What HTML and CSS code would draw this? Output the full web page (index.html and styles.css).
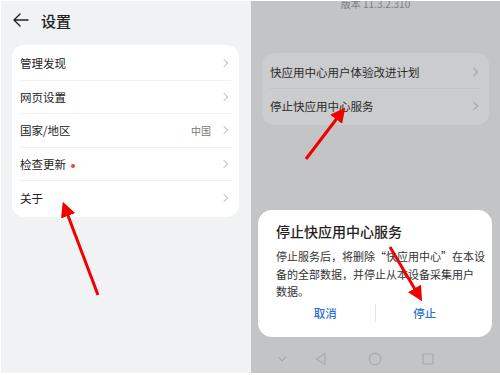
FILE: index.html
```html
<!DOCTYPE html>
<html>
<head>
    <title>设置</title>
    <link rel="stylesheet" href="styles.css">
</head>
<body>
    <div class="screen">
        <div class="panel left">
            <div class="top-bar">
                <svg class="back" width="16" height="14" viewBox="0 0 16 14">
                    <path d="M7 1 L1 7 L7 13 M1 7 H15" fill="none" stroke="#222" stroke-width="1.4" stroke-linecap="round" stroke-linejoin="round"/>
                </svg>
                <span class="title">设置</span>
            </div>
            <div class="card">
                <div class="row"><span class="label">管理发现</span><span class="chev"></span></div>
                <div class="row"><span class="label">网页设置</span><span class="chev"></span></div>
                <div class="row"><span class="label">国家/地区</span><span class="value">中国</span><span class="chev"></span></div>
                <div class="row"><span class="label">检查更新<span class="dot"></span></span><span class="chev"></span></div>
                <div class="row last"><span class="label">关于</span><span class="chev"></span></div>
            </div>
        </div>

        <div class="panel right">
            <div class="version">版本 11.3.2.310</div>
            <div class="card dim">
                <div class="row"><span class="label">快应用中心用户体验改进计划</span><span class="chev"></span></div>
                <div class="row last"><span class="label">停止快应用中心服务</span><span class="chev"></span></div>
            </div>
            <div class="spacer"></div>
            <div class="dialog">
                <div class="dialog-title">停止快应用中心服务</div>
                <div class="dialog-text">停止服务后，将删除“快应用中心”在本设<br>备的全部数据，并停止从本设备采集用户<br>数据。</div>
                <div class="dialog-buttons">
                    <span class="btn">取消</span>
                    <span class="btn-sep"></span>
                    <span class="btn">停止</span>
                </div>
            </div>
            <div class="nav-bar">
                <svg class="nav-down" width="12" height="12" viewBox="0 0 12 12"><path d="M2 4 L6 8 L10 4" fill="none" stroke="#a9aaac" stroke-width="1.2"/></svg>
                <svg class="nav-back" width="14" height="14" viewBox="0 0 14 14"><path d="M11 1.5 L11 12.5 L2.5 7 Z" fill="none" stroke="#a9aaac" stroke-width="1.2" stroke-linejoin="round"/></svg>
                <svg class="nav-home" width="14" height="14" viewBox="0 0 14 14"><circle cx="7" cy="7" r="5.8" fill="none" stroke="#a9aaac" stroke-width="1.2"/></svg>
                <svg class="nav-recent" width="14" height="14" viewBox="0 0 14 14"><rect x="2" y="2" width="10" height="10" rx="1" fill="none" stroke="#a9aaac" stroke-width="1.2"/></svg>
            </div>
        </div>

        <!-- red hint arrows drawn on top of the screenshot -->
        <svg class="arrows" width="500" height="375" viewBox="0 0 500 375">
            <defs>
                <marker id="head" markerWidth="5" markerHeight="5" refX="1" refY="2.5" orient="auto" markerUnits="strokeWidth">
                    <path d="M0 0 L5 2.5 L0 5 Z" fill="#f20000"/>
                </marker>
            </defs>
            <line x1="98" y1="295" x2="67" y2="213" stroke="#f20000" stroke-width="3" marker-end="url(#head)"/>
            <line x1="306" y1="159" x2="338" y2="117" stroke="#f20000" stroke-width="3" marker-end="url(#head)"/>
            <line x1="390" y1="247" x2="416" y2="291" stroke="#f20000" stroke-width="3" marker-end="url(#head)"/>
        </svg>
    </div>
</body>
</html>
```

FILE: styles.css
```css
body {
    margin: 0;
    padding: 0;
    background-color: #fff;
    font-family: "Noto Sans CJK SC", "Noto Sans", sans-serif;
}

.screen {
    position: relative;
    width: 500px;
    height: 375px;
    box-sizing: border-box;
    padding: 1px 0 2px 1px;
    display: flex;
    overflow: hidden;
}

.panel {
    display: flex;
    flex-direction: column;
}

.left {
    width: 250px;
    background-color: #f1f2f4;
}

.right {
    flex: 1;
    background-color: #c3c4c6;
    overflow: hidden;
}

.top-bar {
    display: flex;
    align-items: center;
    height: 38px;
    padding-left: 12px;
}

.title {
    margin-left: 12px;
    font-size: 15px;
    font-weight: 500;
    color: #222;
}

.card {
    margin: 6px 0 0 11px;
    width: 227px;
    background-color: #fff;
    border-radius: 12px;
    padding: 2px 8px;
    box-sizing: border-box;
}

.row {
    display: flex;
    align-items: center;
    height: 33.5px;
    border-bottom: 1px solid #f0f0f2;
    box-sizing: border-box;
}

.row.last {
    border-bottom: none;
}

.label {
    flex: 1;
    font-size: 11.5px;
    color: #222;
}

.value {
    font-size: 10px;
    color: #777;
    margin-right: 10px;
}

.dot {
    display: inline-block;
    width: 4px;
    height: 4px;
    border-radius: 50%;
    background-color: #e8452c;
    margin-left: 5px;
    vertical-align: middle;
}

.chev {
    width: 5px;
    height: 5px;
    border-top: 1px solid #c4c4c6;
    border-right: 1px solid #c4c4c6;
    transform: rotate(45deg);
    margin-right: 4px;
}

.version {
    margin-top: -5px;
    text-align: center;
    font-size: 10px;
    color: #7d7e80;
    height: 14px;
}

.card.dim {
    margin: 43px 0 0 11px;
    background-color: #cbcccd;
    padding: 3px 8px;
}

.card.dim .row {
    height: 33px;
    border-bottom-color: #c2c3c5;
}

.card.dim .label {
    color: #2b2b2b;
}

.card.dim .chev {
    border-color: #a3a4a6;
}

.spacer {
    flex: 1;
}

.dialog {
    margin: 0 8px 0 7px;
    height: 127px;
    background-color: #fff;
    border-radius: 14px;
    padding: 12px 18px 0 18px;
    box-sizing: border-box;
}

.dialog-title {
    font-size: 14px;
    font-weight: 500;
    color: #222;
    line-height: 18px;
}

.dialog-text {
    margin-top: 8px;
    font-size: 11px;
    line-height: 17.5px;
    color: #333;
    white-space: nowrap;
}

.dialog-buttons {
    display: flex;
    align-items: center;
    margin-top: -3px;
    height: 30px;
}

.btn {
    flex: 1;
    text-align: center;
    font-size: 11.5px;
    font-weight: 500;
    color: #2f6fd6;
}

.btn-sep {
    width: 1px;
    height: 18px;
    background-color: #e4e4e4;
}

.nav-bar {
    height: 36px;
    box-sizing: border-box;
    display: flex;
    align-items: center;
    padding: 8px 0 0 25px;
}

.nav-back {
    margin-left: 26px;
}

.nav-home {
    margin-left: 40px;
}

.nav-recent {
    margin-left: 39px;
}

.arrows {
    position: absolute;
    top: 0;
    left: 0;
    pointer-events: none;
}
```
